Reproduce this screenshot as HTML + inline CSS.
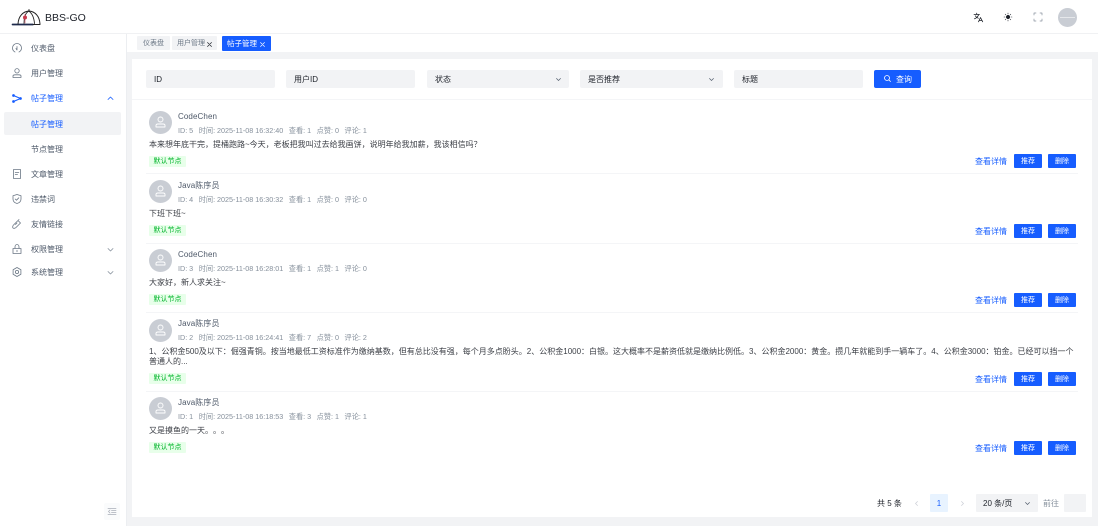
<!DOCTYPE html>
<html lang="zh"><head><meta charset="utf-8"><style>
html,body{margin:0;padding:0;width:1098px;height:526px;overflow:hidden;background:#fff}
body{position:relative;font-family:"Liberation Sans","Noto Sans CJK SC",sans-serif;color:#4e5969;font-size:8px;text-spacing-trim:space-all}
.a{position:absolute;white-space:nowrap}
.t{line-height:12px;height:12px}
svg{position:absolute;overflow:visible;fill:none;stroke-linecap:round;stroke-linejoin:round}
.inp{position:absolute;top:70px;height:18px;background:#f2f3f5;border-radius:2px;line-height:20px;padding-left:8px;box-sizing:border-box;color:#1d2129}
.tag{position:absolute;left:149px;width:37px;height:11px;background:#e8ffea;color:#00b42a;font-size:7px;line-height:11px;text-align:center;border-radius:1px}
.btn{position:absolute;width:28px;height:14px;background:#165dff;color:#fff;font-size:7px;line-height:15px;text-align:center;border-radius:1px}
.link{position:absolute;left:975px;color:#165dff;line-height:12px;height:12px;margin-top:1px}
.name{position:absolute;left:178px;color:#4e5969;line-height:12px;height:12px;white-space:nowrap;margin-top:1px;letter-spacing:.1px}
.meta{position:absolute;left:178px;color:#86909c;font-size:7.2px;line-height:10px;white-space:nowrap;margin-top:1px}
.meta span{margin-right:5.500px}
.body{position:absolute;left:149px;width:928px;color:#1d2129;opacity:.88;line-height:9.5px}
.hr{position:absolute;left:146px;width:932px;height:1px;background:#f4f5f7}
.av{position:absolute;left:149px;width:23px;height:23px;border-radius:50%;background:#c9cdd4}
.m{position:absolute;left:31px;color:#4e5969;line-height:12px;height:12px;white-space:nowrap;margin-top:1px}
.ic{stroke:#6b7785;stroke-width:.8}
</style></head><body>

<!-- layout backgrounds -->
<div class="a" style="left:0;top:33px;width:1098px;height:1px;background:#f0f1f3"></div>
<div class="a" style="left:126px;top:34px;width:1px;height:492px;background:#eceef1"></div>
<div class="a" style="left:127px;top:52px;width:971px;height:474px;background:#f2f3f5"></div>
<div class="a" style="left:132px;top:59px;width:960px;height:458px;background:#fff"></div>

<!-- logo -->
<svg style="left:11px;top:8px" width="30" height="18" viewBox="0 0 30 18">
<path d="M1.500 16.500H22" stroke="#1f2b4d" stroke-width="1.700"/>
<path d="M7 16C7.500 8 12 3.500 18 3C24 3.500 28.500 8 29 16" stroke="#222" stroke-width="1"/>
<path d="M18 3C14 5 13 10 13 15.500" stroke="#222" stroke-width=".8"/>
<path d="M17.500 3C21 5 23 10 23.500 15.500" stroke="#222" stroke-width=".9"/>
<path d="M18 3V1.500" stroke="#222" stroke-width=".9"/>
<path d="M22 16.500H29" stroke="#222" stroke-width="1"/>
<circle cx="14" cy="9.500" r="2" fill="#c93a4d"/>
<path d="M14 6V15" stroke="#c93a4d" stroke-width=".6"/>
</svg>
<div class="a" style="left:45px;top:11px;font-size:10.500px;line-height:14px;color:#1d2129">BBS-GO</div>

<!-- header icons -->
<svg style="left:974px;top:13px" width="9" height="9" viewBox="0 0 9 9" stroke="#1d2129" stroke-width=".8"><path d="M0 1.500H5.500M2.700 .2V1.500M4.700 1.500C4 3.700 2.500 5 .5 5.800M1.300 2.800C2 4 3 4.800 4.300 5.200"/><path d="M4.500 8.800L6.500 4.500L8.700 8.800M5.300 7.500H8"/></svg>
<svg style="left:1004px;top:13px" width="8" height="8" viewBox="0 0 8 8" stroke="#1d2129" stroke-width=".6"><circle cx="4" cy="4" r="1.700" fill="#1d2129"/><path d="M4 0V1M4 7V8M0 4H1M7 4H8M1.200 1.200L1.800 1.800M6.200 6.200L6.800 6.800M6.800 1.200L6.200 1.800M1.800 6.200L1.200 6.800"/></svg>
<svg style="left:1034px;top:13px" width="8" height="8" viewBox="0 0 8 8" stroke="#86909c" stroke-width=".7"><path d="M0 2V0H2M6 0H8V2M8 6V8H6M2 8H0V6"/></svg>
<div class="a" style="left:1058px;top:8px;width:19px;height:19px;border-radius:50%;background:#c9cdd4"></div>
<div class="a" style="left:1060px;top:16.500px;width:15px;height:1.500px;background:#e6e8eb"></div>

<!-- sidebar -->
<svg class="ic" style="left:12px;top:43px" width="10" height="10" viewBox="0 0 10 10"><path d="M3 9C1.500 8.200 .5 6.800 .5 5C.5 2.500 2.500 .5 5 .5S9.500 2.500 9.500 5C9.500 6.800 8.500 8.200 7 9"/><path d="M5 3.500V7M5 7L4 5.500"/></svg>
<div class="m" style="top:42px">仪表盘</div>
<svg class="ic" style="left:12px;top:68px" width="10" height="10" viewBox="0 0 10 10"><circle cx="5" cy="2.800" r="2.200"/><path d="M1 9.500V8C1 7 1.800 6.800 3 6.800H7C8.200 6.800 9 7 9 8V9.500Z"/></svg>
<div class="m" style="top:67px">用户管理</div>
<svg style="left:12px;top:94px" width="10" height="9" viewBox="0 0 10 9" stroke="#165dff" stroke-width="1.100"><path d="M1.500 1.500L8.500 4.500L1.500 7.500"/><circle cx="1.500" cy="1.500" r=".8" fill="#165dff"/><circle cx="1.500" cy="7.500" r=".8" fill="#165dff"/><circle cx="8.500" cy="4.500" r=".8" fill="#165dff"/></svg>
<div class="m" style="top:92px;color:#165dff">帖子管理</div>
<svg style="left:107px;top:96px" width="7" height="4" viewBox="0 0 7 4" stroke="#165dff" stroke-width=".8"><path d="M1 3.500L3.500 1L6 3.500"/></svg>
<div class="a" style="left:4px;top:112px;width:117px;height:23px;background:#f2f3f5;border-radius:2px"></div>
<div class="m" style="top:118px;color:#165dff">帖子管理</div>
<div class="m" style="top:143px">节点管理</div>
<svg class="ic" style="left:13px;top:169px" width="8" height="10" viewBox="0 0 8 10"><path d="M.5.500H7.500V9.500H.5ZM2.200 3.500H5.800M2.200 5.500H4.500"/></svg>
<div class="m" style="top:168px">文章管理</div>
<svg class="ic" style="left:12px;top:194px" width="10" height="10" viewBox="0 0 10 10"><path d="M5 .5L9 1.800V5C9 7.500 7 9 5 9.500C3 9 1 7.500 1 5V1.800Z"/><path d="M3.200 5L4.500 6.200L6.800 3.800"/></svg>
<div class="m" style="top:193px">违禁词</div>
<svg class="ic" style="left:12px;top:219px" width="10" height="10" viewBox="0 0 10 10"><path d="M6 1.500L8.500 4L4 8.500C3 9.500 1.500 9.500 1 9C.5 8.500 .5 7 1.500 6Z"/><path d="M6.500 1L7 .5M3.500 5.500L5 4"/></svg>
<div class="m" style="top:218px">友情链接</div>
<svg class="ic" style="left:12px;top:244px" width="10" height="10" viewBox="0 0 10 10"><path d="M1 4.500H9V9.500H1ZM3 4.500V3C3 1.500 4 .5 5 .5S7 1.500 7 3V4.500M5 6.300V7.700"/></svg>
<div class="m" style="top:243px">权限管理</div>
<svg style="left:107px;top:248px" width="7" height="4" viewBox="0 0 7 4" stroke="#86909c" stroke-width=".8"><path d="M1 .5L3.500 3L6 .5"/></svg>
<svg class="ic" style="left:12px;top:267px" width="10" height="10" viewBox="0 0 10 10"><path d="M5 .5L8.900 2.750V7.250L5 9.500L1.100 7.250V2.750Z"/><circle cx="5" cy="5" r="1.600"/></svg>
<div class="m" style="top:266px">系统管理</div>
<svg style="left:107px;top:271px" width="7" height="4" viewBox="0 0 7 4" stroke="#86909c" stroke-width=".8"><path d="M1 .5L3.500 3L6 .5"/></svg>
<div class="a" style="left:104px;top:503px;width:16px;height:17px;background:#fafbfc;border-radius:2px"></div>
<svg style="left:108px;top:508px" width="8" height="7" viewBox="0 0 8 7" stroke="#a9aeb8" stroke-width=".8"><path d="M0 .5H8M3.500 2.500H8M3.500 4.500H8M0 6.500H8M2 2L.5 3.500L2 5"/></svg>

<!-- tabs -->
<div class="a" style="left:137px;top:36px;width:33px;height:14px;background:#f2f3f5;border-radius:1px;font-size:7px;line-height:15px;text-align:center;color:#6b7785">仪表盘</div>
<div class="a" style="left:172px;top:36px;width:45px;height:14px;background:#f2f3f5;border-radius:1px;font-size:7px;line-height:15px;padding-left:5px;box-sizing:border-box;color:#6b7785">用户管理</div>
<svg style="left:207px;top:41.500px" width="5" height="5" viewBox="0 0 5 5" stroke="#1d2129" stroke-width=".7"><path d="M.5.500L4.500 4.500M4.500.500L.5 4.500"/></svg>
<div class="a" style="left:222px;top:36px;width:49px;height:15px;background:#165dff;color:#fff;border-radius:1px;font-size:7.5px;line-height:16px;padding-left:5px;box-sizing:border-box">帖子管理</div>
<svg style="left:260px;top:41.500px" width="5" height="5" viewBox="0 0 5 5" stroke="#fff" stroke-width=".7"><path d="M.5.500L4.500 4.500M4.500.500L.5 4.500"/></svg>

<!-- filters -->
<div class="inp" style="left:146px;width:129px">ID</div>
<div class="inp" style="left:286px;width:129px">用户ID</div>
<div class="inp" style="left:427px;width:142px">状态</div>
<svg style="left:556px;top:78px" width="5" height="3" viewBox="0 0 5 3" stroke="#4e5969" stroke-width=".7"><path d="M.5.500L2.500 2.500L4.500.500"/></svg>
<div class="inp" style="left:580px;width:143px">是否推荐</div>
<svg style="left:709px;top:78px" width="5" height="3" viewBox="0 0 5 3" stroke="#4e5969" stroke-width=".7"><path d="M.5.500L2.500 2.500L4.500.500"/></svg>
<div class="inp" style="left:734px;width:129px">标题</div>
<div class="a" style="left:874px;top:70px;width:47px;height:18px;background:#165dff;border-radius:2px;color:#fff;line-height:19px;padding-left:22px;box-sizing:border-box">查询</div>
<svg style="left:884px;top:75px" width="7" height="7" viewBox="0 0 7 7" stroke="#fff" stroke-width=".8"><circle cx="3" cy="3" r="2.500"/><path d="M5 5L6.500 6.500"/></svg>
<div class="hr" style="left:132px;width:960px;top:99px"></div>

<!-- post 1 -->
<div class="av" style="top:111px"></div>
<svg style="left:155px;top:116px" width="11" height="12" viewBox="0 0 11 12" stroke="#fff" stroke-width=".9"><circle cx="5.500" cy="3.500" r="2.500"/><path d="M1 11V9.500C1 8.500 2 8 3 8H8C9 8 10 8.500 10 9.500V11Z"/></svg>
<div class="name" style="top:110px">CodeChen</div>
<div class="meta" style="top:125px"><span>ID: 5</span><span>时间: 2025-11-08 16:32:40</span><span>查看: 1</span><span>点赞: 0</span><span>评论: 1</span></div>
<div class="body" style="top:140px">本来想年底干完，提桶跑路~今天，老板把我叫过去给我画饼，说明年给我加薪，我该相信吗？</div>
<div class="tag" style="top:156px">默认节点</div>
<div class="link" style="top:155px">查看详情</div>
<div class="btn" style="left:1014px;top:154px">推荐</div><div class="btn" style="left:1048px;top:154px">删除</div>
<div class="hr" style="top:173px"></div>

<!-- post 2 -->
<div class="av" style="top:180px"></div>
<svg style="left:155px;top:185px" width="11" height="12" viewBox="0 0 11 12" stroke="#fff" stroke-width=".9"><circle cx="5.500" cy="3.500" r="2.500"/><path d="M1 11V9.500C1 8.500 2 8 3 8H8C9 8 10 8.500 10 9.500V11Z"/></svg>
<div class="name" style="top:179px">Java陈序员</div>
<div class="meta" style="top:194px"><span>ID: 4</span><span>时间: 2025-11-08 16:30:32</span><span>查看: 1</span><span>点赞: 0</span><span>评论: 0</span></div>
<div class="body" style="top:209px">下班下班~</div>
<div class="tag" style="top:225px">默认节点</div>
<div class="link" style="top:225px">查看详情</div>
<div class="btn" style="left:1014px;top:224px">推荐</div><div class="btn" style="left:1048px;top:224px">删除</div>
<div class="hr" style="top:243px"></div>

<!-- post 3 -->
<div class="av" style="top:249px"></div>
<svg style="left:155px;top:254px" width="11" height="12" viewBox="0 0 11 12" stroke="#fff" stroke-width=".9"><circle cx="5.500" cy="3.500" r="2.500"/><path d="M1 11V9.500C1 8.500 2 8 3 8H8C9 8 10 8.500 10 9.500V11Z"/></svg>
<div class="name" style="top:248px">CodeChen</div>
<div class="meta" style="top:263px"><span>ID: 3</span><span>时间: 2025-11-08 16:28:01</span><span>查看: 1</span><span>点赞: 1</span><span>评论: 0</span></div>
<div class="body" style="top:278px">大家好，新人求关注~</div>
<div class="tag" style="top:294px">默认节点</div>
<div class="link" style="top:294px">查看详情</div>
<div class="btn" style="left:1014px;top:293px">推荐</div><div class="btn" style="left:1048px;top:293px">删除</div>
<div class="hr" style="top:312px"></div>

<!-- post 4 -->
<div class="av" style="top:319px"></div>
<svg style="left:155px;top:324px" width="11" height="12" viewBox="0 0 11 12" stroke="#fff" stroke-width=".9"><circle cx="5.500" cy="3.500" r="2.500"/><path d="M1 11V9.500C1 8.500 2 8 3 8H8C9 8 10 8.500 10 9.500V11Z"/></svg>
<div class="name" style="top:317px">Java陈序员</div>
<div class="meta" style="top:332px"><span>ID: 2</span><span>时间: 2025-11-08 16:24:41</span><span>查看: 7</span><span>点赞: 0</span><span>评论: 2</span></div>
<div class="body" style="top:347px">1、公积金500及以下：倔强青铜。按当地最低工资标准作为缴纳基数，但有总比没有强，每个月多点盼头。2、公积金1000：白银。这大概率不是薪资低就是缴纳比例低。3、公积金2000：黄金。攒几年就能到手一辆车了。4、公积金3000：铂金。已经可以挡一个普通人的...</div>
<div class="tag" style="top:373px">默认节点</div>
<div class="link" style="top:373px">查看详情</div>
<div class="btn" style="left:1014px;top:372px">推荐</div><div class="btn" style="left:1048px;top:372px">删除</div>
<div class="hr" style="top:391px"></div>

<!-- post 5 -->
<div class="av" style="top:397px"></div>
<svg style="left:155px;top:402px" width="11" height="12" viewBox="0 0 11 12" stroke="#fff" stroke-width=".9"><circle cx="5.500" cy="3.500" r="2.500"/><path d="M1 11V9.500C1 8.500 2 8 3 8H8C9 8 10 8.500 10 9.500V11Z"/></svg>
<div class="name" style="top:396px">Java陈序员</div>
<div class="meta" style="top:411px"><span>ID: 1</span><span>时间: 2025-11-08 16:18:53</span><span>查看: 3</span><span>点赞: 1</span><span>评论: 1</span></div>
<div class="body" style="top:426px">又是摸鱼的一天。。。</div>
<div class="tag" style="top:442px">默认节点</div>
<div class="link" style="top:442px">查看详情</div>
<div class="btn" style="left:1014px;top:441px">推荐</div><div class="btn" style="left:1048px;top:441px">删除</div>

<!-- pagination -->
<div class="a t" style="left:877px;top:498px;color:#1d2129">共 5 条</div>
<svg style="left:915px;top:501px" width="3" height="5" viewBox="0 0 3 5" stroke="#c9cdd4" stroke-width=".7"><path d="M2.500.500L.5 2.500L2.500 4.500"/></svg>
<div class="a" style="left:930px;top:494px;width:18px;height:18px;background:#e8f3ff;color:#165dff;line-height:19px;text-align:center;border-radius:1px">1</div>
<svg style="left:961px;top:501px" width="3" height="5" viewBox="0 0 3 5" stroke="#c9cdd4" stroke-width=".7"><path d="M.5.500L2.500 2.500L.5 4.500"/></svg>
<div class="a" style="left:976px;top:494px;width:62px;height:18px;background:#f2f3f5;border-radius:1px;line-height:19px;padding-left:7px;box-sizing:border-box;color:#1d2129">20 条/页</div>
<svg style="left:1025px;top:502px" width="5" height="3" viewBox="0 0 5 3" stroke="#4e5969" stroke-width=".7"><path d="M.5.500L2.500 2.500L4.500.500"/></svg>
<div class="a t" style="left:1043px;top:498px;color:#86909c">前往</div>
<div class="a" style="left:1064px;top:494px;width:22px;height:18px;background:#f2f3f5;border-radius:1px"></div>
</body></html>
